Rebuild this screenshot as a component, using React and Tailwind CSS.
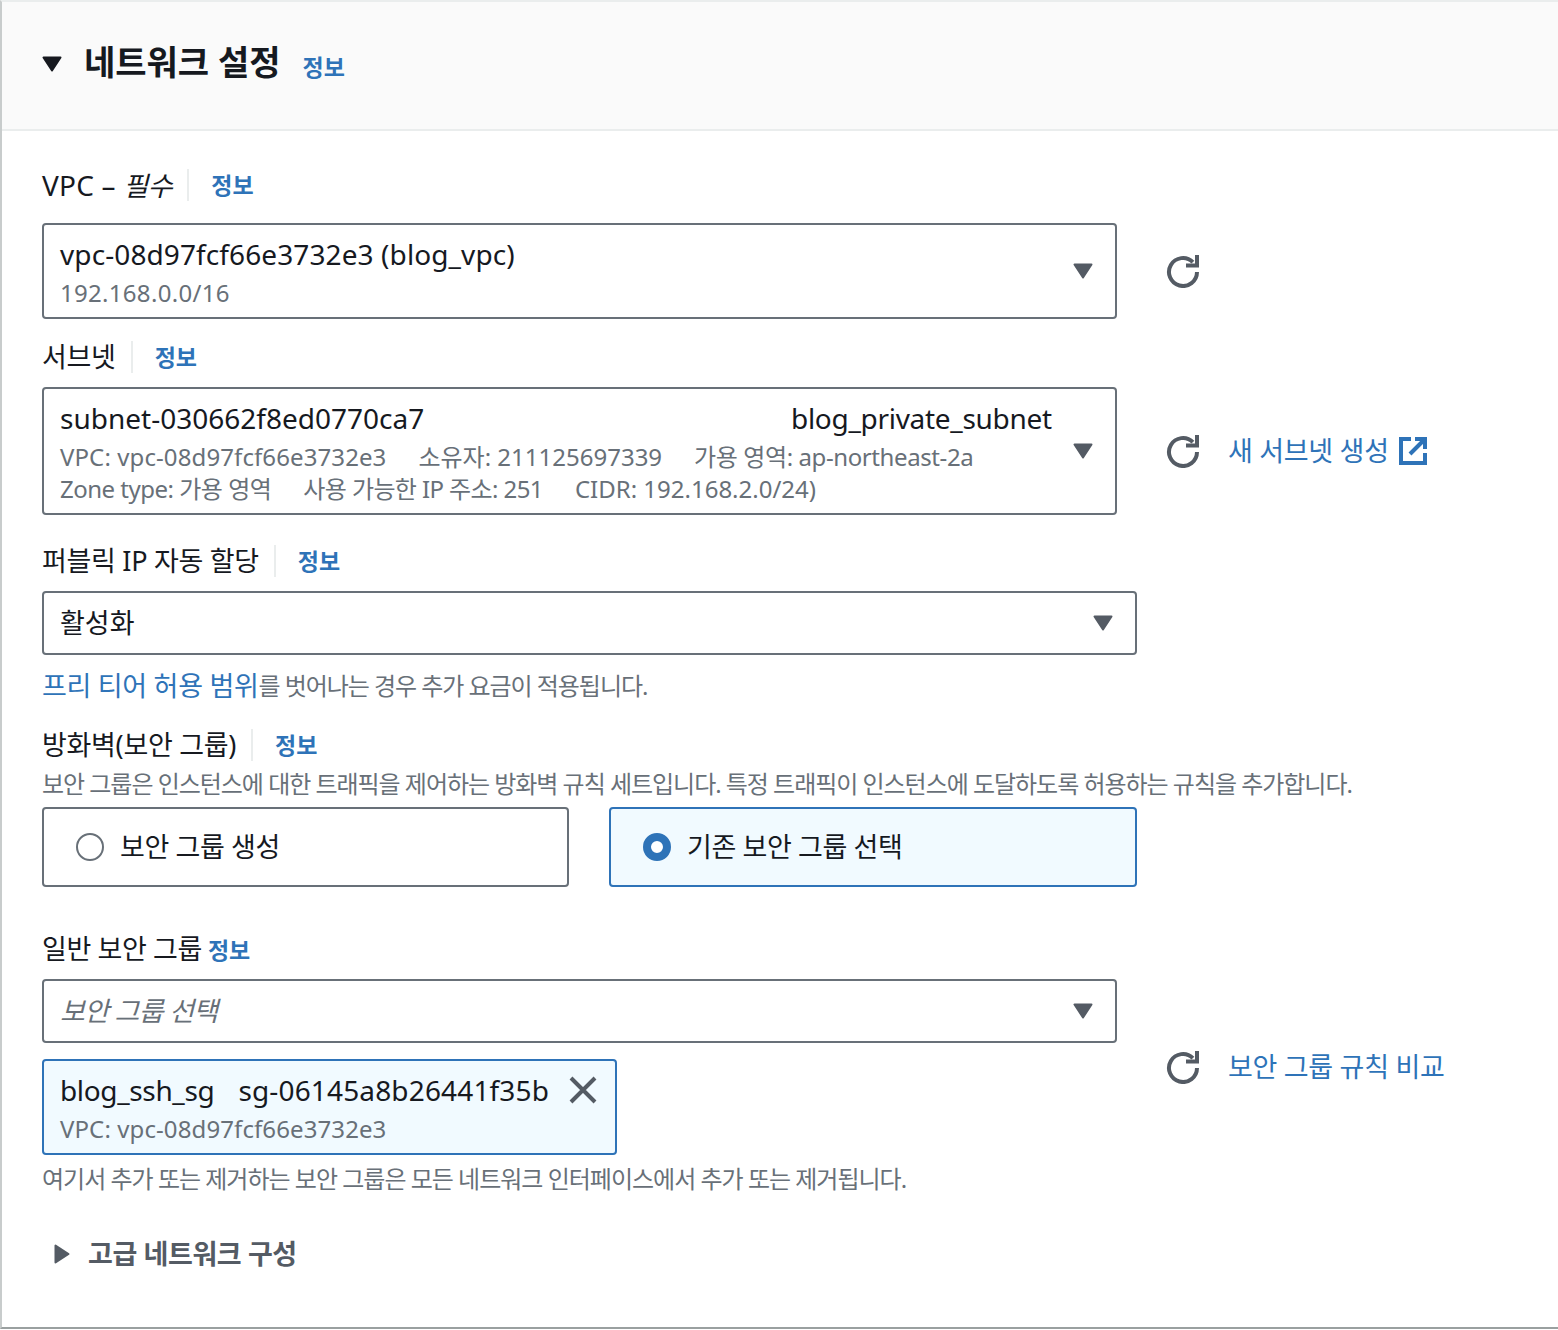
const Caret = ({ className = '' }) => (
    <svg viewBox="0 0 20 16" className={`w-[20px] h-[16px] shrink-0 ${className}`}>
        <path d="M1.500 1.500h17L10 14.500z" fill="currentColor" stroke="currentColor" strokeWidth="2" strokeLinejoin="round" />
    </svg>
);

const Refresh = () => (
    <svg viewBox="0 0 34 34" fill="none" stroke="#545b64" strokeWidth="4" className="w-[34px] h-[34px] shrink-0">
        <path d="M31 18a14 14 0 1 1-4.100-9.900" />
        <path d="M31 1v10.500h-11" strokeLinejoin="miter" />
    </svg>
);

const ExternalIcon = () => (
    <svg viewBox="0 0 28 28" fill="none" stroke="#2e73b8" strokeWidth="4" className="w-[28px] h-[28px] shrink-0">
        <path d="M12 2H2v24h24V16" />
        <path d="M16 2h10v10" />
        <path d="M26 2L11 17" />
    </svg>
);

const Info = () => <span className="text-[23px] font-bold text-[#2e73b8] leading-none">정보</span>;

const Label = ({ children, className = '' }) => (
    <div className={`flex items-center h-[40px] text-[27px] text-[#16191f] ${className}`}>
        <span className="tracking-[-0.3px]">{children}</span>
        <span className="w-[2px] h-[32px] bg-[#eaeded] ml-[15px] mr-[22px]" />
        <Info />
    </div>
);

export default function App() {
    return (
        <div className="w-[1558px] h-[1330px] bg-white font-['Noto_Sans','Noto_Sans_CJK_KR',sans-serif]">
            <div className="h-[1329px] border-2 border-r-0 border-l-[#c8cccc] border-b-[#9aa0a0] border-t-[#eaeded] bg-white">
                <div className="flex items-center h-[129px] pl-[40px] bg-[#fafafa] border-b-2 border-[#eaeded]">
                    <Caret className="text-[#16191f] mb-[4px]" />
                    <h2 className="ml-[22px] mb-[7px] text-[34px] font-bold text-[#16191f] leading-none">네트워크 설정</h2>
                    <span className="ml-[22px] mt-[7px]"><Info /></span>
                </div>

                <div className="pl-[40px]">
                    <Label className="mt-[34px] mb-[18px]"><span className="text-[28px] tracking-[0.2px]">VPC – </span><i>필수</i></Label>
                    <div className="flex items-center">
                        <div className="flex items-center justify-between w-[1075px] h-[96px] pl-[16px] pr-[22px] border-2 border-[#687078] rounded-[4px]">
                            <div className="mt-[3px]">
                                <div className="text-[28px] leading-[40px] tracking-[0.1px] text-[#16191f]">vpc-08d97fcf66e3732e3 (blog_vpc)</div>
                                <div className="mt-[1px] text-[24px] leading-[36px] tracking-[0.3px] text-[#687078]">192.168.0.0/16</div>
                            </div>
                            <Caret className="text-[#545b64]" />
                        </div>
                        <div className="ml-[49px]"><Refresh /></div>
                    </div>

                    <Label className="mt-[18px] mb-[10px]">서브넷</Label>
                    <div className="flex items-center">
                        <div className="flex items-center justify-between w-[1075px] h-[128px] pl-[16px] pr-[22px] border-2 border-[#687078] rounded-[4px]">
                            <div>
                                <div className="flex text-[28px] leading-[40px] text-[#16191f]">
                                    <span className="w-[731px]">subnet-030662f8ed0770ca7</span>
                                    <span className="tracking-[-0.3px]">blog_private_subnet</span>
                                </div>
                                <div className="flex gap-[32px] mt-[3px] text-[24px] leading-[32px] text-[#687078]">
                                    <span className="tracking-[0.1px]">VPC: vpc-08d97fcf66e3732e3</span>
                                    <span>소유자: 211125697339</span>
                                    <span className="tracking-[-0.4px]">가용 영역: ap-northeast-2a</span>
                                </div>
                                <div className="flex gap-[32px] text-[24px] leading-[32px] text-[#687078]">
                                    <span className="tracking-[-0.5px]">Zone type: 가용 영역</span>
                                    <span className="tracking-[-0.6px]">사용 가능한 IP 주소: 251</span>
                                    <span>CIDR: 192.168.2.0/24)</span>
                                </div>
                            </div>
                            <Caret className="text-[#545b64]" />
                        </div>
                        <div className="ml-[49px]"><Refresh /></div>
                        <span className="ml-[28px] text-[27px] tracking-[-0.3px] text-[#2e73b8]">새 서브넷 생성</span>
                        <span className="ml-[10px]"><ExternalIcon /></span>
                    </div>

                    <Label className="mt-[26px] mb-[10px]">퍼블릭 IP 자동 할당</Label>
                    <div className="flex items-center justify-between w-[1095px] h-[64px] pl-[16px] pr-[22px] border-2 border-[#687078] rounded-[4px]">
                        <span className="text-[27px] text-[#16191f]">활성화</span>
                        <Caret className="text-[#545b64]" />
                    </div>
                    <div className="flex items-center h-[40px] mt-[10px] pt-[2px] text-[24px] tracking-[-1.050px] text-[#687078]">
                        <span className="text-[27px] tracking-[-0.3px] text-[#2e73b8]">프리 티어 허용 범위</span>를 벗어나는 경우 추가 요금이 적용됩니다.
                    </div>

                    <Label className="mt-[20px]">방화벽(보안 그룹)</Label>
                    <div className="flex items-center h-[36px] pt-[1px] text-[24px] tracking-[-1.030px] text-[#687078]">
                        보안 그룹은 인스턴스에 대한 트래픽을 제어하는 방화벽 규칙 세트입니다. 특정 트래픽이 인스턴스에 도달하도록 허용하는 규칙을 추가합니다.
                    </div>
                    <div className="flex gap-[40px] mt-[6px] w-[1095px]">
                        <div className="flex items-center w-[527px] h-[80px] pl-[32px] border-2 border-[#687078] rounded-[4px]">
                            <span className="w-[28px] h-[28px] rounded-full border-2 border-[#687078] bg-white" />
                            <span className="ml-[16px] text-[27px] tracking-[-0.4px] text-[#16191f]">보안 그룹 생성</span>
                        </div>
                        <div className="flex items-center w-[528px] h-[80px] pl-[32px] border-2 border-[#2e73b8] rounded-[4px] bg-[#f1faff]">
                            <span className="w-[28px] h-[28px] rounded-full border-[8px] border-[#2e73b8] bg-white" />
                            <span className="ml-[16px] text-[27px] tracking-[-0.4px] text-[#16191f]">기존 보안 그룹 선택</span>
                        </div>
                    </div>

                    <div className="flex items-center h-[40px] mt-[42px] mb-[10px] pt-[1px] text-[27px] text-[#16191f]">
                        <span className="tracking-[-0.4px]">일반 보안 그룹</span>
                        <span className="ml-[6px]"><Info /></span>
                    </div>
                    <div className="flex items-center">
                        <div className="w-[1075px]">
                            <div className="flex items-center justify-between h-[64px] pl-[16px] pr-[22px] border-2 border-[#687078] rounded-[4px]">
                                <i className="text-[27px] tracking-[-0.7px] text-[#687078]">보안 그룹 선택</i>
                                <Caret className="text-[#545b64]" />
                            </div>
                            <div className="w-[575px] h-[96px] mt-[16px] pl-[16px] pr-[18px] border-2 border-[#2e73b8] rounded-[4px] bg-[#f1faff]">
                                <div className="flex items-center h-[58px] text-[28px] text-[#16191f]">
                                    <span className="tracking-[-0.35px]">blog_ssh_sg</span>
                                    <span className="ml-[24px] tracking-[0.15px]">sg-06145a8b26441f35b</span>
                                    <svg viewBox="0 0 28 28" fill="none" stroke="#545b64" strokeWidth="4" className="ml-auto w-[28px] h-[28px] shrink-0">
                                        <path d="M2 2l24 24M26 2L2 26" />
                                    </svg>
                                </div>
                                <div className="text-[24px] leading-[20px] tracking-[0.1px] text-[#687078]">VPC: vpc-08d97fcf66e3732e3</div>
                            </div>
                        </div>
                        <div className="ml-[49px]"><Refresh /></div>
                        <span className="ml-[28px] text-[27px] tracking-[-0.3px] text-[#2e73b8]">보안 그룹 규칙 비교</span>
                    </div>
                    <div className="flex items-center h-[36px] mt-[5px] pt-[1px] text-[24px] tracking-[-1px] text-[#687078]">
                        여기서 추가 또는 제거하는 보안 그룹은 모든 네트워크 인터페이스에서 추가 또는 제거됩니다.
                    </div>

                    <div className="flex items-center h-[40px] mt-[38px] pl-[12px] text-[#545b64]">
                        <svg viewBox="0 0 16 20" className="w-[16px] h-[20px] shrink-0">
                            <path d="M1.500 1.500v17L14.500 10z" fill="currentColor" stroke="currentColor" strokeWidth="2" strokeLinejoin="round" />
                        </svg>
                        <span className="ml-[18px] text-[27px] tracking-[-0.4px] font-bold">고급 네트워크 구성</span>
                    </div>
                </div>
            </div>
        </div>
    );
}
